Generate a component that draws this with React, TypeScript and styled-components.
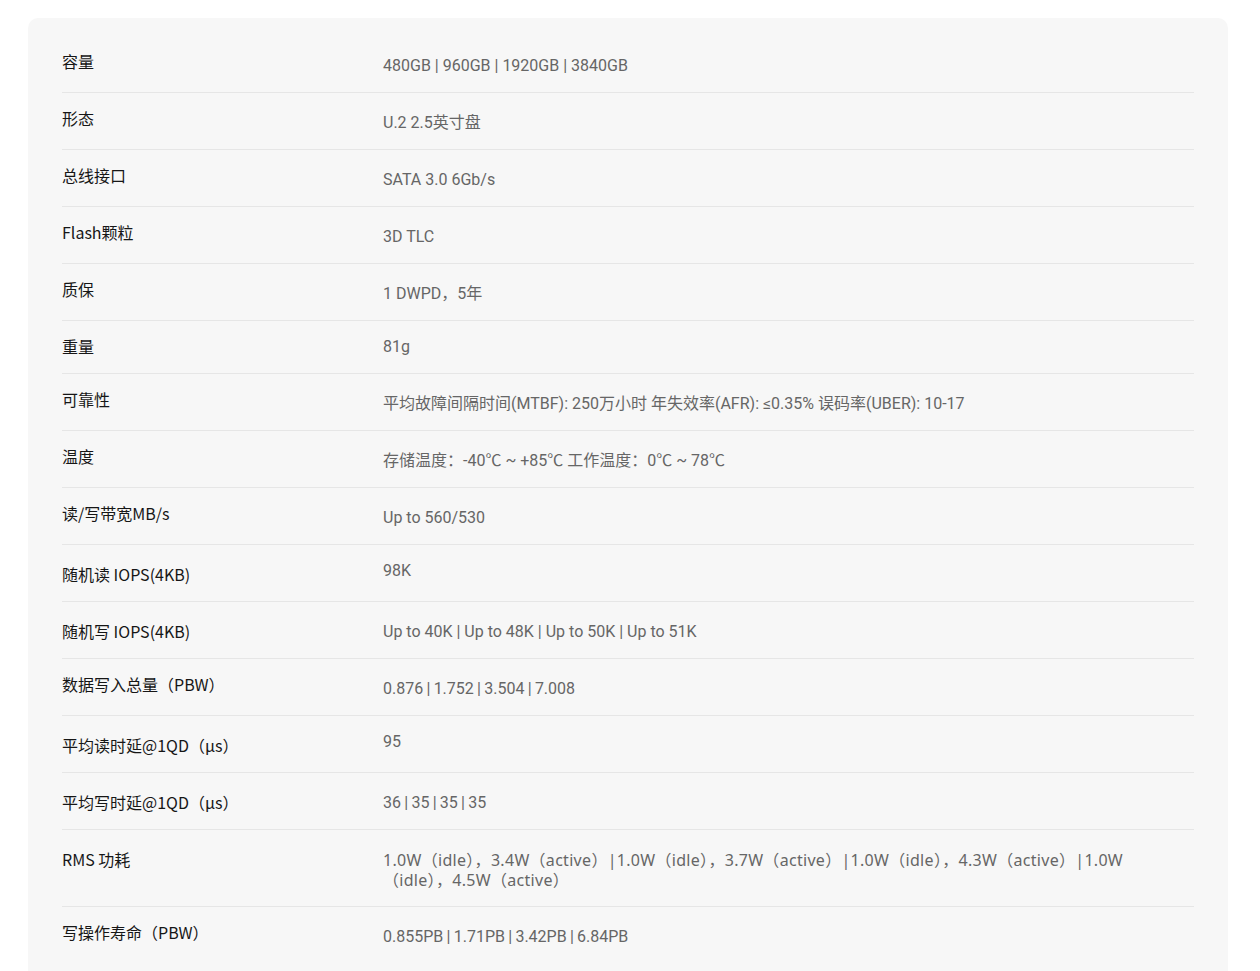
import React from "react";
import styled, { createGlobalStyle } from "styled-components";

const Global = createGlobalStyle`
  html, body { margin: 0; padding: 0; background: #ffffff; }
  body { font-family: "Noto Sans CJK SC", sans-serif; }
`;

const Page = styled.div`
  padding: 18px 0 0 28px;
`;

const Card = styled.section`
  width: 1200px;
  box-sizing: border-box;
  background: #f7f7f7;
  border-radius: 10px;
  padding: 18px 34px 20px;
`;

const Row = styled.div`
  display: grid;
  grid-template-columns: 321px 1fr;
  padding: 16px 0;
  border-bottom: 1px solid #e6e6e6;
  &:last-child { border-bottom: none; }
`;

const Label = styled.div<{ $shift?: boolean }>`
  padding-top: ${(p) => (p.$shift ? "4px" : "0")};
  padding-bottom: 2px;
  font-family: "Noto Sans CJK SC", "Noto Sans", sans-serif;
  font-size: 16px;
  line-height: 18px;
  color: #161616;
`;

const Value = styled.div<{ $shift?: boolean; $alt?: boolean }>`
  padding-top: ${(p) => (p.$shift ? "4px" : "0")};
  max-width: ${(p) => (p.$alt ? "770px" : "811px")};
  font-family: ${(p) =>
    p.$alt
      ? `"Noto Sans", "Noto Sans CJK SC", sans-serif`
      : `Roboto, "Noto Sans CJK SC", sans-serif`};
  letter-spacing: ${(p) => (p.$alt ? "0.3px" : "0")};
  font-size: 16px;
  line-height: 20px;
  color: #666666;
`;

type Spec = { k: string; v: string; lk?: boolean; vk?: boolean; alt?: boolean };

const T = "\u2009|\u2009";

const specs: Spec[] = [
  { k: "容量", v: "480GB | 960GB | 1920GB | 3840GB", vk: true },
  { k: "形态", v: "U.2 2.5英寸盘", vk: true },
  { k: "总线接口", v: "SATA 3.0 6Gb/s", vk: true },
  { k: "Flash颗粒", v: "3D TLC", vk: true },
  { k: "质保", v: "1 DWPD，5年", vk: true },
  { k: "重量", v: "81g" },
  { k: "可靠性", v: "平均故障间隔时间(MTBF): 250万小时 年失效率(AFR): ≤0.35% 误码率(UBER): 10-17", vk: true },
  { k: "温度", v: "存储温度：-40℃ ~ +85℃ 工作温度：0℃ ~ 78℃", vk: true },
  { k: "读/写带宽MB/s", v: "Up to 560/530", vk: true },
  { k: "随机读 IOPS(4KB)", v: "98K", lk: true },
  { k: "随机写 IOPS(4KB)", v: "Up to 40K | Up to 48K | Up to 50K | Up to 51K", lk: true, vk: true },
  { k: "数据写入总量（PBW）", v: ["0.876", "1.752", "3.504", "7.008"].join(T), vk: true },
  { k: "平均读时延@1QD（μs）", v: "95", lk: true },
  { k: "平均写时延@1QD（μs）", v: ["36", "35", "35", "35"].join(T), lk: true, vk: true },
  {
    k: "RMS 功耗",
    v: "1.0W（idle），3.4W（active）|1.0W（idle），3.7W（active）|1.0W（idle），4.3W（active）|1.0W（idle），4.5W（active）",
    lk: true,
    vk: true,
    alt: true,
  },
  { k: "写操作寿命（PBW）", v: ["0.855PB", "1.71PB", "3.42PB", "6.84PB"].join(T), vk: true },
];

export default function App() {
  return (
    <>
      <Global />
      <Page>
        <Card>
          {specs.map((s) => (
            <Row key={s.k}>
              <Label $shift={s.lk}>{s.k}</Label>
              <Value $shift={s.vk} $alt={s.alt}>
                {s.v}
              </Value>
            </Row>
          ))}
        </Card>
      </Page>
    </>
  );
}
